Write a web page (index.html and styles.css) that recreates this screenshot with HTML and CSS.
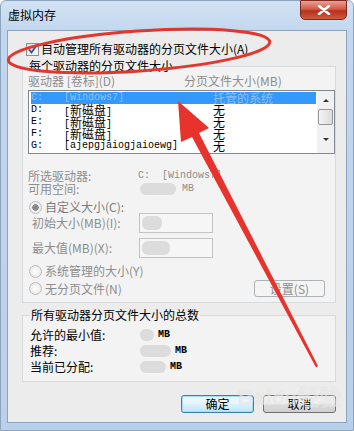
FILE: index.html
```html
<!DOCTYPE html>
<html lang="zh-CN">

<head>
     <meta charset="UTF-8">
     <meta name="viewport" content="width=device-width, initial-scale=1.0">
     <title>虚拟内存</title>
     <link rel="stylesheet" href="styles.css">
</head>

<body>
     <div class="screen">
          <div class="window">
               <div class="titlebar">
                    <span class="title">虚拟内存</span>
                    <span class="close">
                         <svg width="14" height="10" viewBox="0 0 14 10">
                              <path d="M2 1 L12 9 M12 1 L2 9" stroke="#fff" stroke-width="2.6" stroke-linecap="round" />
                         </svg>
                    </span>
               </div>

               <div class="client">
                    <div class="check-row">
                         <span class="checkbox">
                              <svg width="11" height="11" viewBox="0 0 11 11">
                                   <path d="M2 5.5 L4.5 8.5 L9 2" fill="none" stroke="#3b5493" stroke-width="1.8" />
                              </svg>
                         </span>
                         <span>自动管理所有驱动器的分页文件大小(A)</span>
                    </div>

                    <fieldset class="group drives">
                         <legend>每个驱动器的分页文件大小</legend>

                         <div class="list-head">
                              <span class="col-drive">驱动器 [卷标](D)</span>
                              <span>分页文件大小(MB)</span>
                         </div>

                         <div class="listbox">
                              <div class="rows">
                                   <div class="row selected"><span class="c1">C:</span><span class="c2">[Windows7]</span><span class="c3">托管的系统</span></div>
                                   <div class="row"><span class="c1">D:</span><span class="c2">[<span class="cjk">新磁盘</span>]</span><span class="c3">无</span></div>
                                   <div class="row"><span class="c1">E:</span><span class="c2">[<span class="cjk">新磁盘</span>]</span><span class="c3">无</span></div>
                                   <div class="row"><span class="c1">F:</span><span class="c2">[<span class="cjk">新磁盘</span>]</span><span class="c3">无</span></div>
                                   <div class="row"><span class="c1">G:</span><span class="c2">[ajepgjaiogjaioewg]</span><span class="c3">无</span></div>
                              </div>
                              <div class="scrollbar">
                                   <span class="arrow up"></span>
                                   <span class="thumb"></span>
                                   <span class="arrow down"></span>
                              </div>
                         </div>

                         <div class="info first">
                              <span class="info-label">所选驱动器:</span>
                              <span class="mono">C:&nbsp;&nbsp;[Windows7]</span>
                         </div>
                         <div class="info">
                              <span class="info-label">可用空间:</span>
                              <span class="smudge free"></span>
                              <span class="mono">MB</span>
                         </div>

                         <div class="option custom">
                              <span class="radio checked"></span>
                              <span>自定义大小(C):</span>
                         </div>
                         <div class="field">
                              <span class="field-label">初始大小(MB)(I):</span>
                              <span class="input"><span class="smudge blot"></span></span>
                         </div>
                         <div class="field second">
                              <span class="field-label">最大值(MB)(X):</span>
                              <span class="input"><span class="smudge blot wide"></span></span>
                         </div>

                         <div class="option system">
                              <span class="radio"></span>
                              <span>系统管理的大小(Y)</span>
                         </div>
                         <div class="option none">
                              <span class="radio"></span>
                              <span>无分页文件(N)</span>
                              <span class="btn disabled">设置(S)</span>
                         </div>
                    </fieldset>

                    <fieldset class="group totals">
                         <legend>所有驱动器分页文件大小的总数</legend>
                         <div class="total-row">
                              <span class="total-label">允许的最小值:</span>
                              <span class="smudge" style="width: 14px"></span>
                              <span class="mb">MB</span>
                         </div>
                         <div class="total-row">
                              <span class="total-label">推荐:</span>
                              <span class="smudge" style="width: 31px"></span>
                              <span class="mb">MB</span>
                         </div>
                         <div class="total-row">
                              <span class="total-label">当前已分配:</span>
                              <span class="smudge" style="width: 26px"></span>
                              <span class="mb">MB</span>
                         </div>
                    </fieldset>

                    <div class="actions">
                         <span class="btn default">确定</span>
                         <span class="btn">取消</span>
                    </div>
               </div>
          </div>

          <!-- 红色标注 -->
          <svg class="marks" width="354" height="431" viewBox="0 0 354 431">
               <ellipse cx="139" cy="51" rx="131" ry="20" transform="rotate(-4 139 51)" fill="none" stroke="#e2362f" stroke-width="3" />
               <polygon points="178,101 209,128 199,133 318,366 316,367.5 192,137 181,142" fill="#e8332d" />
          </svg>
          <div class="watermark">Bai<span>du</span>经验</div>
     </div>
</body>

</html>
```

FILE: styles.css
```css
body {
     margin: 0;
     background: #fff;
}

.screen {
     position: relative;
     width: 354px;
     height: 431px;
     font-family: "Noto Sans CJK SC", sans-serif;
     font-size: 12px;
     line-height: 14px;
     color: #000;
}

.window {
     width: 354px;
     height: 431px;
     box-sizing: border-box;
     border: 1px solid #8da4bf;
     border-radius: 6px 6px 0 0;
     background: linear-gradient(#d3e2f3, #c2d7ee 30px, #b9d0ea);
}

.titlebar {
     height: 29px;
     display: flex;
     justify-content: space-between;
     align-items: flex-start;
     padding: 0 6px 0 7px;
}

.title {
     margin-top: 6px;
     line-height: 16px;
     font-size: 12px;
}

.close {
     width: 45px;
     height: 18px;
     margin-top: -1px;
     display: flex;
     align-items: center;
     justify-content: center;
     border: 1px solid #7e2a20;
     border-radius: 0 0 5px 5px;
     background: linear-gradient(#e9a193, #d35a45 45%, #b8301c 55%, #cf5a40);
}

.client {
     height: 393px;
     margin: 0 6px;
     box-sizing: border-box;
     border: 1px solid #8ea4bd;
     background: #ececec;
     padding: 11px 10px 0 14px;
}

.check-row {
     display: flex;
     align-items: center;
     height: 14px;
     padding-left: 4px;
     gap: 2px;
}

.checkbox {
     width: 11px;
     height: 11px;
     border: 1px solid #8e8f8f;
     background: linear-gradient(135deg, #dcdcdc, #fafafa);
     display: flex;
}

.group {
     margin: 3px 0 0;
     padding: 0 0 5px 5px;
     border: 1px solid #d7dbde;
     background: #f3f3f3;
     min-width: 0;
}

.group legend {
     padding: 0 1px;
     margin-left: 0;
     line-height: 14px;
}

.list-head {
     display: flex;
     margin-top: 2px;
     line-height: 12px;
     color: #8d8d8d;
}

.col-drive {
     width: 156px;
}

.listbox {
     display: flex;
     height: 64px;
     margin-top: 3px;
     box-sizing: border-box;
     border: 1px solid #828790;
     background: #fff;
}

.rows {
     flex: 1;
     padding: 1px 1px 0 2px;
}

.row {
     display: flex;
     height: 12px;
     line-height: 12px;
     font-family: "Liberation Mono", "Noto Sans CJK SC", monospace;
     font-size: 10px;
}

.row .c1 {
     width: 33px;
}

.row .c2 {
     width: 149px;
     white-space: nowrap;
}

.row .c3,
.row .cjk {
     font-family: "Noto Sans CJK SC", sans-serif;
     font-size: 12px;
     line-height: 12px;
}

.row.selected {
     background: #3399ff;
     color: #95bde9;
}

.scrollbar {
     width: 17px;
     display: flex;
     flex-direction: column;
     align-items: center;
     background: #f1f1f1;
}

.arrow {
     width: 0;
     height: 0;
     border-left: 3px solid transparent;
     border-right: 3px solid transparent;
}

.arrow.up {
     margin-top: 8px;
     border-bottom: 3px solid #333;
}

.arrow.down {
     margin-top: 13px;
     border-top: 3px solid #333;
}

.thumb {
     width: 13px;
     height: 14px;
     margin-top: 7px;
     border: 1px solid #979797;
     border-radius: 2px;
     background: linear-gradient(90deg, #f3f3f3, #dcdcdc);
}

.info {
     display: flex;
     align-items: center;
     height: 13px;
     line-height: 13px;
     color: #8d8d8d;
}

.info.first {
     margin-top: 15px;
}

.info-label {
     width: 110px;
}

.mono {
     font-family: "Liberation Mono", monospace;
     font-size: 10px;
     color: #8d8d8d;
}

.smudge {
     display: inline-block;
     height: 12px;
     border-radius: 6px;
     background: #dcdcdc;
}

.smudge.free {
     width: 36px;
     margin: 0 6px 0 2px;
}

.option {
     display: flex;
     align-items: center;
     gap: 3px;
     color: #8d8d8d;
     height: 12px;
     padding-left: 1px;
}

.option.custom {
     margin-top: 6px;
     color: #7c7c7c;
}

.option.system {
     margin-top: 7px;
}

.option.none {
     height: 17px;
     margin-top: 3px;
}

.radio {
     width: 11px;
     height: 11px;
     border: 1px solid #bcbcbc;
     border-radius: 50%;
     background: radial-gradient(circle, #fff, #e2e2e2);
     box-sizing: content-box;
}

.radio.checked {
     background: radial-gradient(circle, #8a8a8a 0 3px, #f2f2f2 3.5px, #e0e0e0);
}

.field {
     display: flex;
     align-items: center;
     height: 20px;
     color: #8d8d8d;
}

.field.second {
     margin-top: 5px;
}

.field-label {
     width: 107px;
     padding-left: 4px;
}

.input {
     width: 72px;
     height: 18px;
     border: 1px solid #c3c3c3;
     background: #f6f6f6;
     display: flex;
     align-items: center;
}

.smudge.blot {
     width: 20px;
     height: 14px;
     margin-left: 2px;
}

.smudge.blot.wide {
     width: 28px;
}

.btn {
     display: flex;
     align-items: center;
     justify-content: center;
     box-sizing: border-box;
     width: 73px;
     height: 18px;
     border: 1px solid #707070;
     border-radius: 3px;
     background: linear-gradient(#f2f2f2 45%, #dddddd 55%, #cfcfcf);
}

.btn.disabled {
     width: 71px;
     height: 17px;
     margin-left: auto;
     margin-right: 10px;
     border-color: #adb2b5;
     background: #f4f4f4;
     color: #8d8d8d;
}

.btn.default {
     border-color: #3c7fb1;
     background: linear-gradient(#eaf6fd 45%, #d9f0fc 55%, #bee6fd);
     box-shadow: inset 0 0 0 1px #a8dcf7;
}

.totals {
     margin-top: 5px;
     padding: 5px 0 6px 7px;
}

.total-row {
     display: flex;
     align-items: center;
     height: 16px;
}

.total-label {
     width: 110px;
}

.mb {
     margin-left: 4px;
     font-family: "Liberation Mono", monospace;
     font-size: 10px;
     font-weight: bold;
}

.actions {
     display: flex;
     justify-content: flex-end;
     gap: 9px;
     margin-top: 13px;
}

.marks {
     position: absolute;
     top: 0;
     left: 0;
     pointer-events: none;
}

.watermark {
     position: absolute;
     left: 238px;
     top: 386px;
     font-family: "Liberation Sans", sans-serif;
     font-size: 22px;
     line-height: 24px;
     font-weight: bold;
     color: rgba(255, 255, 255, 0.5);
     text-shadow: 0 0 1px rgba(150, 150, 150, 0.3);
     pointer-events: none;
}

.watermark span {
     font-size: 20px;
}
```
